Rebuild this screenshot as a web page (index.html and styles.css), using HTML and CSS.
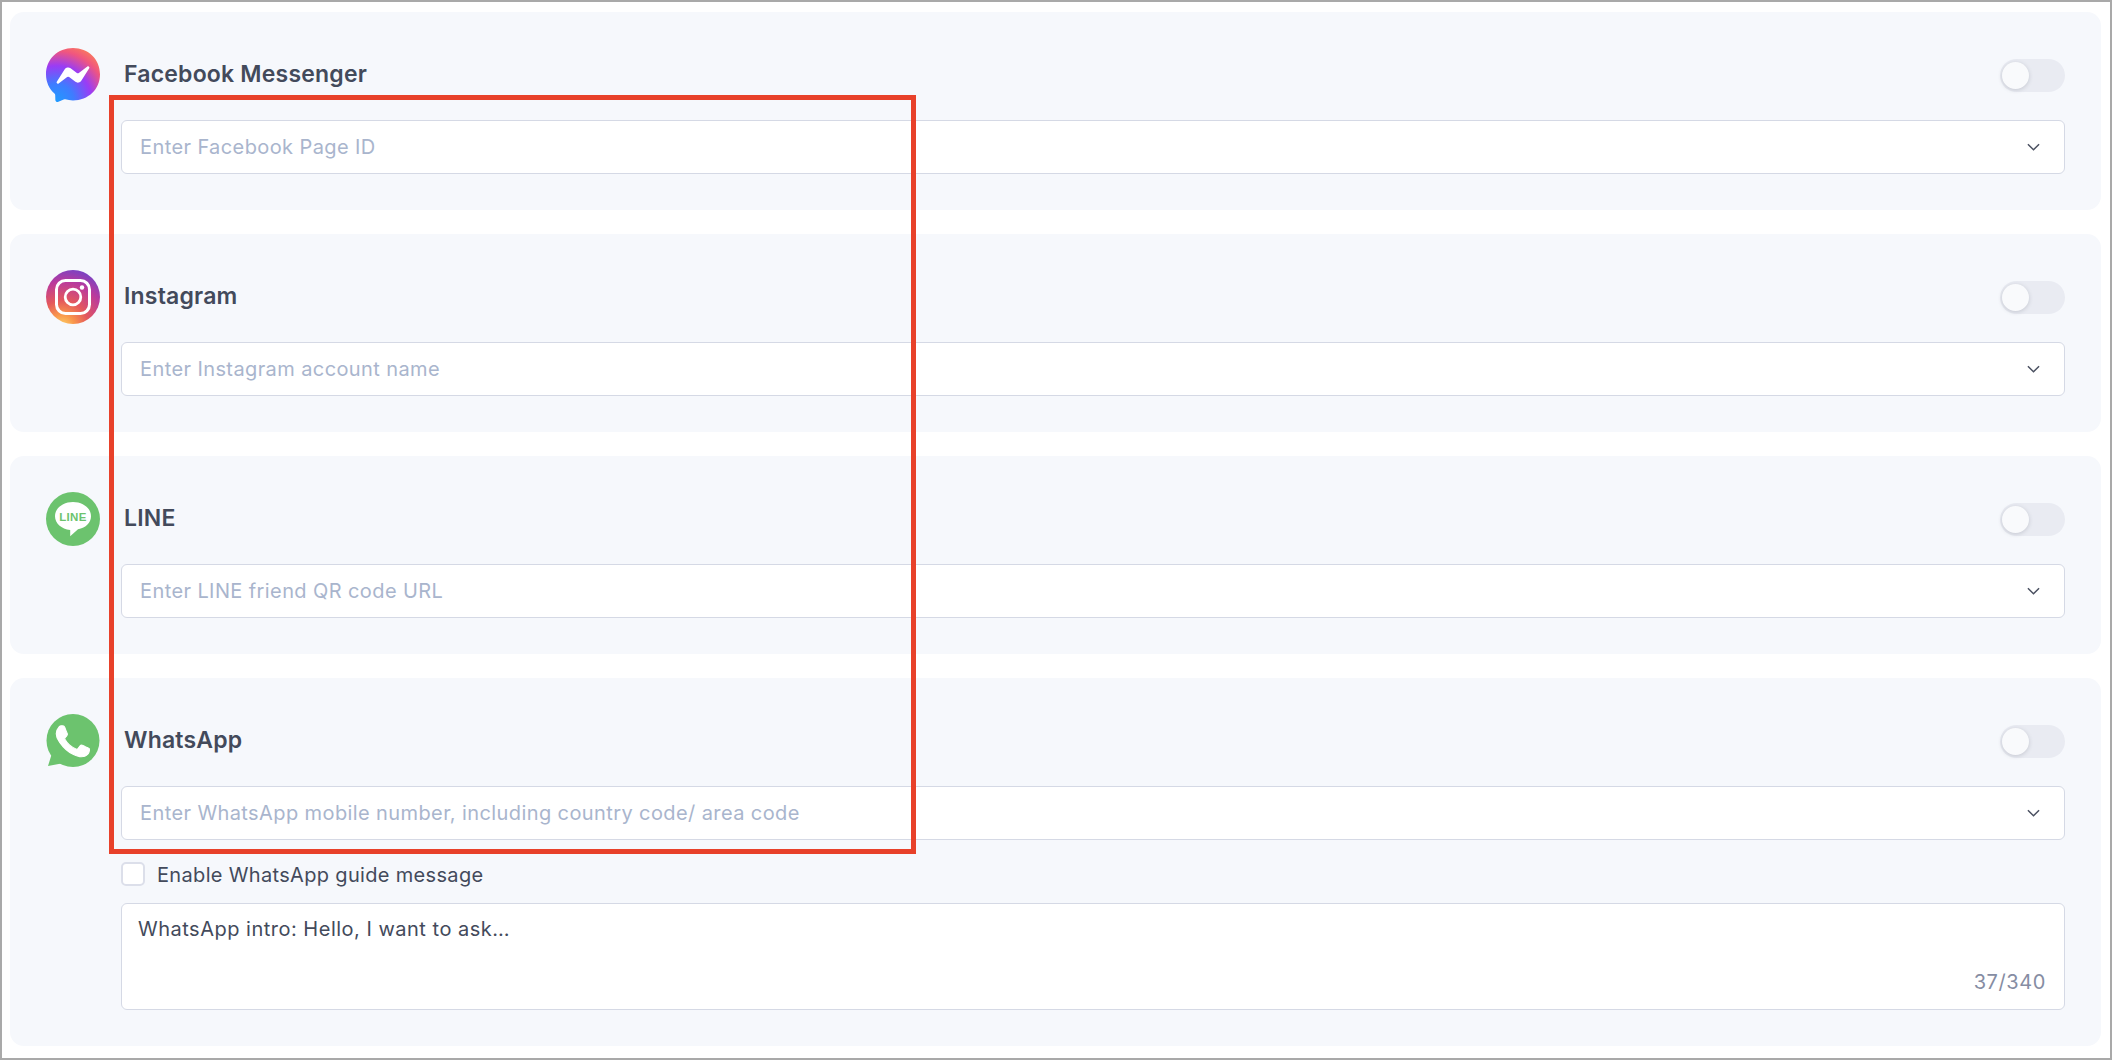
FILE: index.html
```html
<!DOCTYPE html>
<html lang="en">
<head>
<meta charset="utf-8">
<title>Channels</title>
<link rel="stylesheet" href="styles.css">
</head>
<body>
<main class="frame">
  <section class="card">
    <svg class="icon" viewBox="0 0 24 24" aria-hidden="true">
      <defs>
        <radialGradient id="msg" cx="0.19" cy="0.99" r="1.1">
          <stop offset="0" stop-color="#1f9bff"/>
          <stop offset="0.3" stop-color="#3f7cff"/>
          <stop offset="0.6" stop-color="#9a3cf5"/>
          <stop offset="0.85" stop-color="#f0567f"/>
          <stop offset="1" stop-color="#f9785f"/>
        </radialGradient>
      </defs>
      <path fill="url(#msg)" d="M12 0C5.24 0 0 4.952 0 11.64c0 3.499 1.434 6.521 3.769 8.61a.96.96 0 0 1 .323.683l.065 2.135a.96.96 0 0 0 1.347.85l2.381-1.053a.96.96 0 0 1 .641-.046A13 13 0 0 0 12 23.28c6.76 0 12-4.952 12-11.64S18.76 0 12 0"/>
      <path fill="#fff" d="M4.795 15.05l3.525-5.593a1.8 1.8 0 0 1 2.603-.48l2.804 2.103a.72.72 0 0 0 .867-.003l3.786-2.873c.505-.384 1.165.222.825.757l-3.525 5.593a1.8 1.8 0 0 1-2.603.48l-2.804-2.103a.72.72 0 0 0-.867.003l-3.786 2.873c-.505.384-1.165-.222-.825-.757"/>
    </svg>
    <div class="body">
      <div class="head"><h2 class="title">Facebook Messenger</h2><span class="toggle"><span class="knob"></span></span></div>
      <div class="select"><span class="placeholder">Enter Facebook Page ID</span><svg class="chevron" viewBox="0 0 14 8" aria-hidden="true"><path d="M1 1l6 6 6-6"/></svg></div>
    </div>
  </section>

  <section class="card">
    <svg class="icon" viewBox="0 0 54 54" aria-hidden="true">
      <defs>
        <radialGradient id="ig" cx="0.3" cy="1.05" r="1.15">
          <stop offset="0" stop-color="#fdd568"/>
          <stop offset="0.2" stop-color="#f9964b"/>
          <stop offset="0.42" stop-color="#e4585c"/>
          <stop offset="0.72" stop-color="#bb3a9c"/>
          <stop offset="1" stop-color="#6a44cc"/>
        </radialGradient>
      </defs>
      <circle cx="27" cy="27" r="27" fill="url(#ig)"/>
      <rect x="10.5" y="10.5" width="33" height="33" rx="9" fill="none" stroke="#fff" stroke-width="3"/>
      <circle cx="27" cy="27" r="7.8" fill="none" stroke="#fff" stroke-width="2.8"/>
      <circle cx="36" cy="17.5" r="2.2" fill="#fff"/>
    </svg>
    <div class="body">
      <div class="head"><h2 class="title">Instagram</h2><span class="toggle"><span class="knob"></span></span></div>
      <div class="select"><span class="placeholder">Enter Instagram account name</span><svg class="chevron" viewBox="0 0 14 8" aria-hidden="true"><path d="M1 1l6 6 6-6"/></svg></div>
    </div>
  </section>

  <section class="card">
    <svg class="icon" viewBox="0 0 54 54" aria-hidden="true">
      <circle cx="27" cy="27" r="27" fill="#6cc36e"/>
      <path fill="#fff" d="M27 10C16.8 10 9 16.3 9 24.2c0 7.2 6.400 12.600 15.200 13.800v6.200L32 37.300c8-1.700 13-6.700 13-13.100C45 16.300 37.200 10 27 10z"/>
      <text class="line-text" x="27" y="29" text-anchor="middle">LINE</text>
    </svg>
    <div class="body">
      <div class="head"><h2 class="title">LINE</h2><span class="toggle"><span class="knob"></span></span></div>
      <div class="select"><span class="placeholder">Enter LINE friend QR code URL</span><svg class="chevron" viewBox="0 0 14 8" aria-hidden="true"><path d="M1 1l6 6 6-6"/></svg></div>
    </div>
  </section>

  <section class="card">
    <svg class="icon" viewBox="0 0 54 54" aria-hidden="true">
      <circle cx="27" cy="26.500" r="26.500" fill="#6cc36e"/>
      <path fill="#6cc36e" d="M2 52l5-16 11 13z"/>
      <path fill="#fff" stroke="#fff" stroke-width=".4" transform="translate(27 27) scale(2.75) translate(-12.100 -11.900)" d="M17.472 14.382c-.297-.149-1.758-.867-2.03-.967-.273-.099-.471-.148-.67.15-.197.297-.767.966-.94 1.164-.173.199-.347.223-.644.075-.297-.15-1.255-.463-2.39-1.475-.883-.788-1.48-1.761-1.653-2.059-.173-.297-.018-.458.13-.606.134-.133.298-.347.446-.52.149-.174.198-.298.298-.497.099-.198.05-.371-.025-.52-.075-.149-.669-1.612-.916-2.207-.242-.579-.487-.5-.669-.51-.173-.008-.371-.01-.57-.01-.198 0-.52.074-.792.372-.272.297-1.04 1.016-1.04 2.479 0 1.462 1.065 2.875 1.213 3.074.149.198 2.096 3.2 5.077 4.487.709.306 1.262.489 1.694.625.712.227 1.36.195 1.871.118.571-.085 1.758-.719 2.006-1.413.248-.694.248-1.289.173-1.413-.074-.124-.272-.198-.57-.347"/>
    </svg>
    <div class="body">
      <div class="head"><h2 class="title">WhatsApp</h2><span class="toggle"><span class="knob"></span></span></div>
      <div class="select"><span class="placeholder">Enter WhatsApp mobile number, including country code/ area code</span><svg class="chevron" viewBox="0 0 14 8" aria-hidden="true"><path d="M1 1l6 6 6-6"/></svg></div>
      <div class="check-row"><span class="checkbox"></span><span class="check-label">Enable WhatsApp guide message</span></div>
      <div class="textarea"><span class="textarea-value">WhatsApp intro: Hello, I want to ask…</span><span class="counter">37/340</span></div>
    </div>
  </section>

  <div class="highlight"></div>
</main>
</body>
</html>
```
FILE: styles.css
```css
* { box-sizing: border-box; }
html, body { margin: 0; padding: 0; background: #fff; }
body { font-family: Inter, "Noto Sans", sans-serif; font-size: 20px; letter-spacing: .4px; color: #434a5b; }

.frame {
  position: relative;
  width: 2112px;
  height: 1060px;
  border: 2px solid #a9a9a9;
  padding: 10px 9px 0 8px;
  display: flex;
  flex-direction: column;
  gap: 24px;
}

.card {
  display: flex;
  gap: 21px;
  padding: 36px;
  background: #f6f8fc;
  border-radius: 14px;
}

.icon { width: 54px; height: 54px; flex: none; }
.line-text { font: 700 11.5px "Liberation Sans", sans-serif; fill: #6cc36e; letter-spacing: .3px; }

.body { flex: 1; min-width: 0; }

.head {
  display: flex;
  align-items: center;
  justify-content: space-between;
  height: 54px;
  margin-bottom: 18px;
}

.title {
  margin: 0 0 3px 3px;
  font-size: 23px;
  font-weight: 600;
  line-height: 30px;
  letter-spacing: .2px;
  color: #434a5b;
}

.toggle {
  position: relative;
  display: block;
  width: 65px;
  height: 33px;
  border-radius: 17px;
  background: #e9ebf2;
}

.knob {
  position: absolute;
  top: 3px;
  left: 2px;
  width: 27px;
  height: 27px;
  border-radius: 50%;
  background: #f9fafc;
  box-shadow: 0 1px 4px rgba(67, 74, 91, .22);
}

.select {
  display: flex;
  align-items: center;
  justify-content: space-between;
  height: 54px;
  padding: 0 24px 0 18px;
  background: #fff;
  border: 1px solid #d5d9e5;
  border-radius: 6px;
}

.placeholder { color: #a9b5cd; line-height: 28px; }

.chevron { width: 13px; height: 8px; fill: none; stroke: #4a5060; stroke-width: 1.6; }

.check-row {
  display: flex;
  align-items: center;
  gap: 12px;
  height: 24px;
  margin-top: 22px;
}

.checkbox {
  width: 24px;
  height: 24px;
  background: #fff;
  border: 2px solid #dcdfea;
  border-radius: 5px;
}

.check-label { line-height: 28px; letter-spacing: .33px; padding-top: 1px; }

.textarea {
  position: relative;
  height: 107px;
  margin-top: 17px;
  padding: 11px 16px;
  background: #fff;
  border: 1px solid #d5d9e5;
  border-radius: 6px;
}

.textarea-value { display: block; line-height: 28px; letter-spacing: .5px; }

.counter {
  position: absolute;
  right: 18px;
  bottom: 13px;
  color: #868da3;
  line-height: 28px;
  letter-spacing: .6px;
}

.highlight {
  position: absolute;
  left: 107px;
  top: 93px;
  width: 807px;
  height: 759px;
  border: 5px solid #e8412a;
  pointer-events: none;
}
```
